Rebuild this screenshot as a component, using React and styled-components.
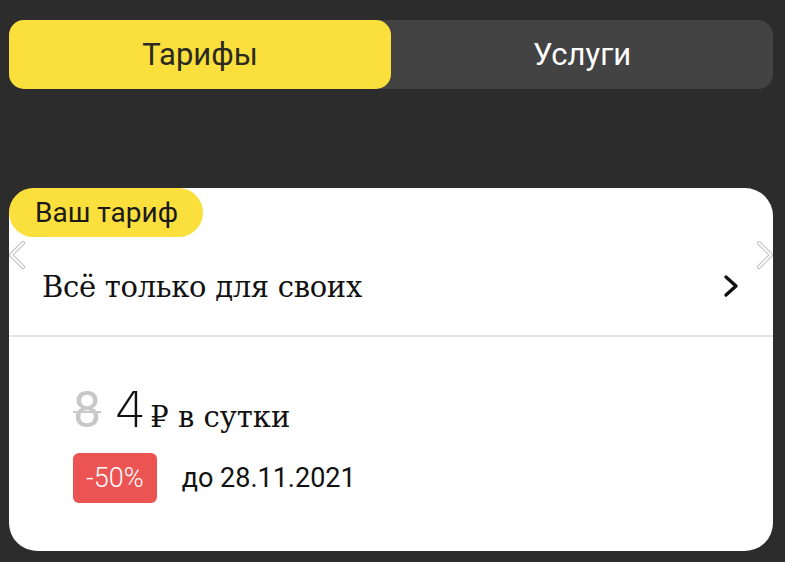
import React from 'react'
import styled, { createGlobalStyle } from 'styled-components'

const Global = createGlobalStyle`
    html, body {
        margin: 0;
        padding: 0;
        background: #2c2c2c;
    }
    body {
        font-family: "Roboto", "Liberation Sans", sans-serif;
    }
`

const Page = styled.div`
    width: 785px;
    height: 562px;
    padding: 20px 12px 0 9px;
    box-sizing: border-box;
    display: flex;
    flex-direction: column;
    gap: 99px;
`

const Segment = styled.div`
    display: flex;
    height: 69px;
    background: #434343;
    border-radius: 15px;
`

const Tab = styled.div`
    flex: 1;
    display: flex;
    align-items: center;
    justify-content: center;
    border-radius: 15px;
    font-size: 31px;
    background: ${p => (p.$active ? '#fadf3d' : 'transparent')};
    color: ${p => (p.$active ? '#2a2a22' : '#ffffff')};
`

const Card = styled.section`
    position: relative;
    height: 363px;
    background: #fff;
    border-radius: 28px;
    display: flex;
    flex-direction: column;
`

const Badge = styled.div`
    align-self: flex-start;
    height: 49px;
    padding: 0 25px 0 26px;
    display: flex;
    align-items: center;
    background: #fadf3d;
    border-radius: 25px;
    font-size: 28px;
    color: #1a1a1a;
`

const TitleRow = styled.div`
    display: flex;
    align-items: center;
    justify-content: space-between;
    height: 99px;
    padding: 0 32px 0 33px;
    border-bottom: 2px solid #e3e3e3;
    margin-top: -1px;
`

const Title = styled.h2`
    margin: 0;
    font-family: "DejaVu Serif", "Liberation Serif", serif;
    font-weight: normal;
    font-size: 29px;
    color: #111;
    letter-spacing: -0.3px;
    padding-top: 2px;
`

const Body = styled.div`
    padding: 44px 64px 0 64px;
    display: flex;
    flex-direction: column;
    gap: 14px;
`

const PriceLine = styled.div`
    display: flex;
    align-items: baseline;
    font-family: "DejaVu Serif", "Liberation Serif", serif;
    color: #111;
`

const OldPrice = styled.span`
    font-family: "Roboto", sans-serif;
    font-size: 50px;
    color: #c8c8c8;
    text-decoration: line-through;
    text-decoration-thickness: 2px;
    margin-right: 14px;
`

const Price = styled.span`
    font-family: "DejaVu Sans", sans-serif;
    font-weight: 300;
    font-size: 49px;
    margin-right: 4px;
`

const Unit = styled.span`
    font-size: 29px;
`

const Promo = styled.div`
    display: flex;
    align-items: center;
    gap: 25px;
`

const Discount = styled.span`
    height: 50px;
    padding: 0 13px;
    display: flex;
    align-items: center;
    background: #ec5454;
    border-radius: 6px;
    color: #fff;
    font-size: 27px;
    font-weight: 300;
`

const Until = styled.span`
    font-size: 27px;
    color: #111;
`

const NavArrow = styled.svg`
    position: absolute;
    top: 52px;
    ${p => (p.$side === 'left' ? 'left: -2px;' : 'right: -2px;')}
`

const Chevron = () => (
    <svg width="20" height="26" viewBox="0 0 20 26">
        <path d="M5 4 L15 13 L5 22" fill="none" stroke="#111" strokeWidth="3.4" strokeLinecap="round" strokeLinejoin="round" />
    </svg>
)

const SideArrow = ({ side }) => (
    <NavArrow $side={side} width="20" height="30" viewBox="0 0 20 30">
        <path
            d={side === 'left' ? 'M16 3 L4 15 L16 27' : 'M4 3 L16 15 L4 27'}
            fill="none"
            stroke="#bdbdbd"
            strokeWidth="4"
            strokeLinecap="round"
            strokeLinejoin="round"
        />
        <path
            d={side === 'left' ? 'M16 3 L4 15 L16 27' : 'M4 3 L16 15 L4 27'}
            fill="none"
            stroke="#fff"
            strokeWidth="2"
            strokeLinecap="round"
            strokeLinejoin="round"
        />
    </NavArrow>
)

export default function App() {
    return (
        <>
            <Global />
            <Page>
                <Segment>
                    <Tab $active>Тарифы</Tab>
                    <Tab>Услуги</Tab>
                </Segment>
                <Card>
                    <Badge>Ваш тариф</Badge>
                    <SideArrow side="left" />
                    <SideArrow side="right" />
                    <TitleRow>
                        <Title>Всё только для своих</Title>
                        <Chevron />
                    </TitleRow>
                    <Body>
                        <PriceLine>
                            <OldPrice>8</OldPrice>
                            <Price>4</Price>
                            <Unit>₽ в сутки</Unit>
                        </PriceLine>
                        <Promo>
                            <Discount>-50%</Discount>
                            <Until>до 28.11.2021</Until>
                        </Promo>
                    </Body>
                </Card>
            </Page>
        </>
    )
}
